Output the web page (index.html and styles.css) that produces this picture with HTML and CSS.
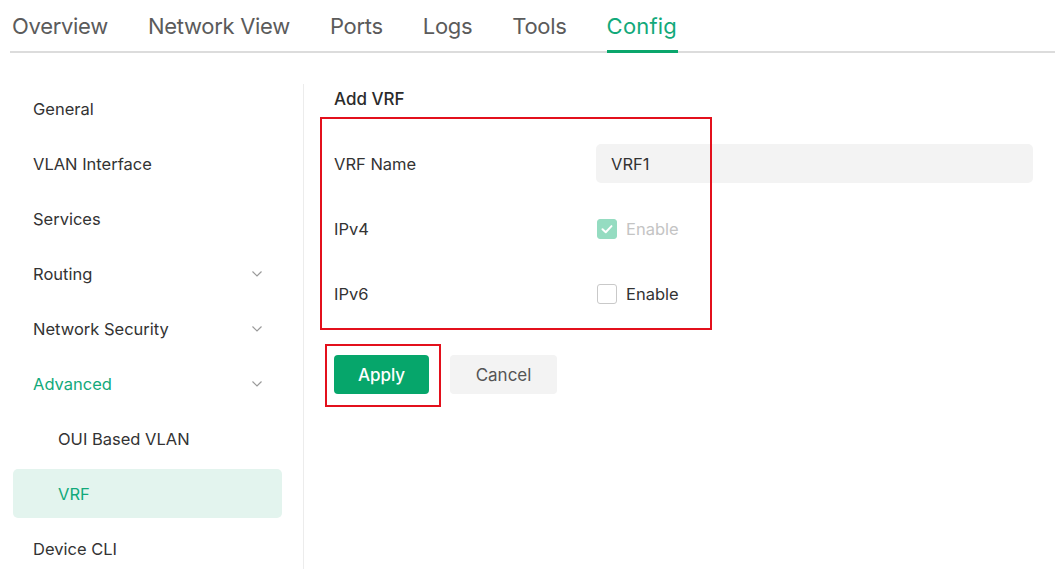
FILE: index.html
```html
<!DOCTYPE html>
<html>
<head>
<meta charset="utf-8">
<link rel="stylesheet" href="styles.css">
</head>
<body>
<nav class="tabs">
  <span class="tab">Overview</span>
  <span class="tab">Network View</span>
  <span class="tab">Ports</span>
  <span class="tab">Logs</span>
  <span class="tab">Tools</span>
  <span class="tab active">Config</span>
</nav>
<div class="layout">
  <aside class="sidebar">
    <div class="item">General</div>
    <div class="item">VLAN Interface</div>
    <div class="item">Services</div>
    <div class="item">Routing<svg class="chev" viewBox="0 0 10 6"><path d="M0.5 0.5 L5 5 L9.5 0.5" fill="none" stroke="#9a9a9a" stroke-width="1.2"/></svg></div>
    <div class="item">Network Security<svg class="chev" viewBox="0 0 10 6"><path d="M0.5 0.5 L5 5 L9.5 0.5" fill="none" stroke="#9a9a9a" stroke-width="1.2"/></svg></div>
    <div class="item green">Advanced<svg class="chev" viewBox="0 0 10 6"><path d="M0.5 0.5 L5 5 L9.5 0.5" fill="none" stroke="#9a9a9a" stroke-width="1.2"/></svg></div>
    <div class="item sub">OUI Based VLAN</div>
    <div class="item sub selected">VRF</div>
    <div class="item">Device CLI</div>
  </aside>
  <main class="main">
    <h2 class="title">Add VRF</h2>
    <div class="form">
      <div class="row">
        <label class="label">VRF Name</label>
        <div class="input">VRF1</div>
      </div>
      <div class="row">
        <label class="label">IPv4</label>
        <div class="check disabled">
          <span class="box checked"><svg viewBox="0 0 20 20"><path d="M5 10.2 L8.6 13.6 L15 6.8" fill="none" stroke="#fff" stroke-width="2.2" stroke-linecap="round" stroke-linejoin="round"/></svg></span>
          <span>Enable</span>
        </div>
      </div>
      <div class="row">
        <label class="label">IPv6</label>
        <div class="check">
          <span class="box"></span>
          <span>Enable</span>
        </div>
      </div>
    </div>
    <div class="actions">
      <button class="btn primary">Apply</button>
      <button class="btn">Cancel</button>
    </div>
    <div class="mark mark-form"></div>
    <div class="mark mark-apply"></div>
  </main>
</div>
</body>
</html>
```
FILE: styles.css
```css
* { box-sizing: border-box; }
html, body { margin: 0; padding: 0; background: #fff; }
body {
  font-family: Inter, "Noto Sans", "Liberation Sans", sans-serif;
  color: #333;
  width: 1055px;
  height: 569px;
  overflow: hidden;
}
.tabs {
  display: flex;
  gap: 40px;
  margin-left: 10px;
  padding-left: 2px;
  height: 53px;
  border-bottom: 2px solid #dcdcdc;
}
.tab {
  font-size: 22px;
  line-height: 53px;
  color: #5b5b5b;
  letter-spacing: -0.3px;
  white-space: nowrap;
}
.tab.active {
  color: #12a97a;
  border-bottom: 3px solid #0aa66c;
  height: 53px;
  line-height: 53px;
  letter-spacing: 0.2px;
  padding-right: 1px;
}
.layout {
  display: flex;
  height: 516px;
}
.sidebar {
  width: 304px;
  margin-top: 31px;
  padding: 0 21px 0 13px;
  border-right: 1px solid #ececec;
  display: flex;
  flex-direction: column;
  gap: 6px;
}
.item {
  flex: none;
  height: 49px;
  display: flex;
  align-items: center;
  justify-content: space-between;
  padding: 0 20px 0 20px;
  font-size: 16.5px;
  color: #333;
  border-radius: 5px;
}
.item.green { color: #12a97a; }
.item.sub { padding-left: 45px; }
.item.selected { background: #e3f4ee; color: #12a97a; }
.chev { width: 10px; height: 6px; }
.main {
  position: relative;
  flex: 1;
  padding: 34px 22px 0 30px;
}
.title {
  margin: 0;
  font-size: 17px;
  line-height: 24px;
  font-weight: 500;
  color: #2b2b2b;
}
.form {
  margin-top: 33px;
  display: flex;
  flex-direction: column;
  gap: 26px;
}
.row {
  display: flex;
  align-items: center;
  height: 39px;
}
.label {
  width: 262px;
  font-size: 16.5px;
  color: #333;
}
.input {
  flex: 1;
  height: 39px;
  background: #f3f3f3;
  border-radius: 5px;
  padding-left: 15px;
  display: flex;
  align-items: center;
  font-size: 16.5px;
  color: #333;
}
.check {
  display: flex;
  align-items: center;
  gap: 9px;
  font-size: 16.5px;
  color: #333;
  padding-left: 1px;
}
.check.disabled { color: #c4c4c4; }
.box {
  width: 20px;
  height: 20px;
  border: 1px solid #c9c9c9;
  border-radius: 3px;
  display: flex;
}
.box.checked {
  background: #95dcc1;
  border-color: #95dcc1;
}
.box svg { width: 18px; height: 18px; }
.actions {
  display: flex;
  gap: 21px;
  margin-top: 42px;
}
.btn {
  height: 39px;
  border: none;
  border-radius: 4px;
  font-family: inherit;
  font-size: 17px;
  background: #f3f3f3;
  color: #555;
  width: 107px;
  padding: 0;
}
.btn.primary {
  width: 95px;
  background: #06a66b;
  color: #fff;
  font-weight: 500;
}
.mark {
  position: absolute;
  border: 2px solid #e3101c;
  pointer-events: none;
}
.mark-form { left: 16px; top: 64px; width: 392px; height: 213px; }
.mark-apply { left: 21px; top: 291px; width: 116px; height: 63px; }
```
